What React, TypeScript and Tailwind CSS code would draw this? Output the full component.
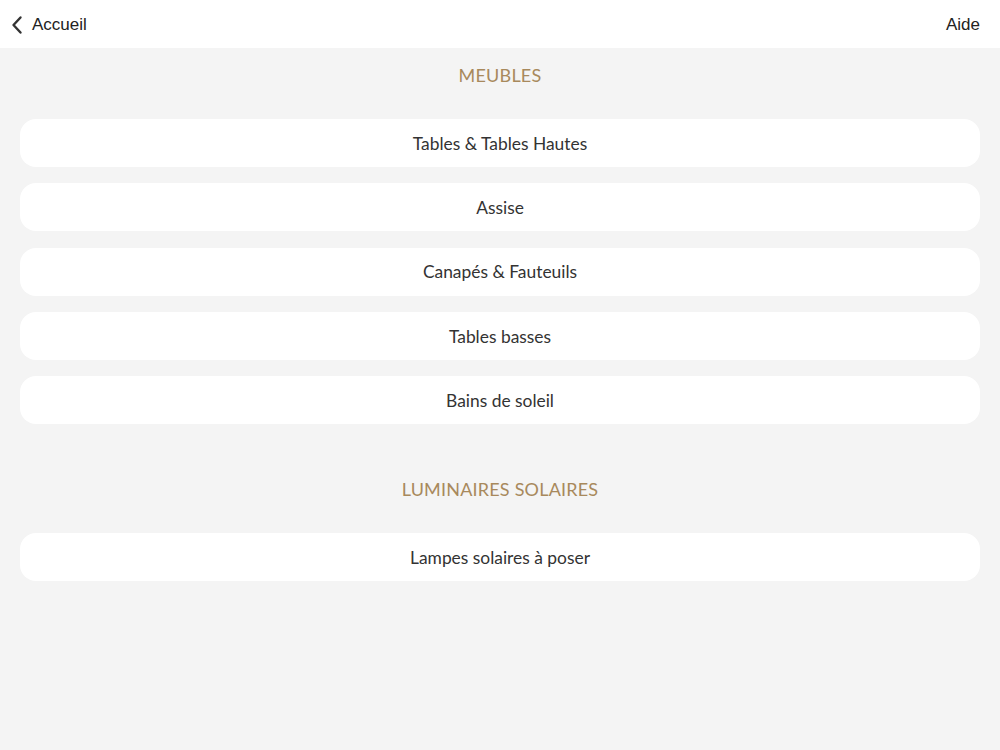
import React from "react";

const sections = [
  {
    title: "MEUBLES",
    items: ["Tables & Tables Hautes", "Assise", "Canapés & Fauteuils", "Tables basses", "Bains de soleil"],
  },
  {
    title: "LUMINAIRES SOLAIRES",
    items: ["Lampes solaires à poser"],
  },
];

export default function App() {
  return (
    <div className="min-h-[750px] bg-[#f4f4f4] font-['Lato',sans-serif]">
      <div className="h-12 bg-white flex items-center justify-between pl-[10px] pr-5 pt-[2px] font-['Liberation_Sans',sans-serif] text-[17px] text-[#222]">
        <button className="flex items-center gap-[6px]">
          <svg width="16" height="22" viewBox="0 0 16 22" fill="none">
            <path d="M10.5 3.5 L3.5 11 L10.5 18.5" stroke="#333" strokeWidth="2.4" strokeLinecap="round" strokeLinejoin="round" />
          </svg>
          <span>Accueil</span>
        </button>
        <button>Aide</button>
      </div>
      <div className="px-5 pt-4">
        {sections.map((s, i) => (
          <div key={s.title} className={i > 0 ? "mt-[54px]" : ""}>
            <h2 className="text-center text-[18px] leading-[22px] tracking-[0.2px] text-[#a8895c]">{s.title}</h2>
            <div className="mt-[33px] flex flex-col gap-[16.25px]">
              {s.items.map((it) => (
                <div key={it} className="h-12 rounded-2xl bg-white flex items-center justify-center pt-[2px] text-[17.4px] text-[#333]">
                  {it}
                </div>
              ))}
            </div>
          </div>
        ))}
      </div>
    </div>
  );
}
